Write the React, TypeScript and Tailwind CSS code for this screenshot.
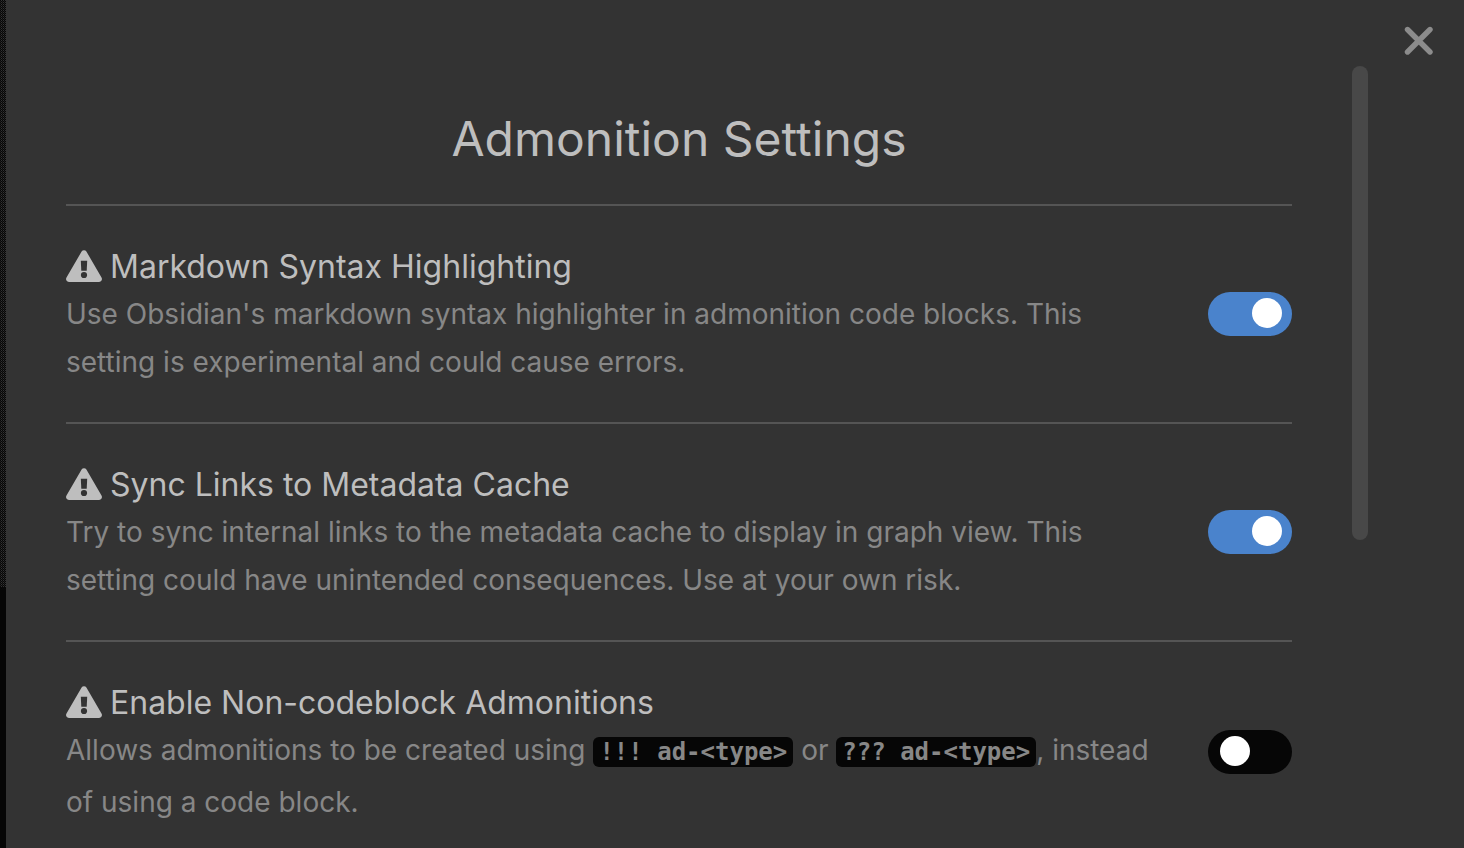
import { useState, type ReactNode } from "react";

function WarningIcon() {
  return (
    <svg viewBox="0 0 36 32" className="h-8 w-9 shrink-0" aria-hidden="true">
      <path d="M15.6 1.5a2.8 2.8 0 0 1 4.8 0L35.5 27.6a2.9 2.9 0 0 1-2.5 4.4H3a2.9 2.9 0 0 1-2.5-4.4Z" fill="currentColor" />
      <path d="M14.8 10.8h6.4l-.5 10h-5.4Z" fill="#333333" />
      <circle cx="18" cy="25" r="3.1" fill="#333333" />
    </svg>
  );
}

type SettingProps = { id: string; title: string; initial: boolean; children: ReactNode };

function Setting({ id, title, initial, children }: SettingProps) {
  const [on, setOn] = useState(initial);
  return (
    <section className="flex items-center justify-between border-t-2 border-[#555555] py-9">
      <div className="max-w-[1096px] min-w-0">
        <label htmlFor={id} className="flex items-center gap-2 text-[32px] leading-12 text-[#bebebe]">
          <WarningIcon />
          <span className="pt-[2px] leading-[46px]">{title}</span>
        </label>
        <p className="text-[28px] leading-12 text-[#878787]">{children}</p>
      </div>
      <input
        id={id}
        type="checkbox"
        role="switch"
        checked={on}
        onChange={(e) => setOn(e.target.checked)}
        className="flex h-11 w-21 shrink-0 cursor-pointer appearance-none items-start rounded-full bg-[#060606] px-3 pt-[6px] before:block before:size-[30px] before:rounded-full before:bg-white checked:justify-end checked:bg-[#4a83cc] checked:px-[10px]"
      />
    </section>
  );
}

function Code({ children }: { children: ReactNode }) {
  return (
    <code className="rounded-md bg-[#060606] px-[6px] py-px font-['DejaVu_Sans_Mono',monospace] text-[24px] leading-[52px] font-bold text-[#878787]">
      {children}
    </code>
  );
}

export default function App() {
  return (
    <div className="flex h-screen overflow-hidden bg-[#060606] font-['Inter',sans-serif]">
      <div
        aria-hidden="true"
        className="h-[587px] w-[6px] shrink-0 bg-[conic-gradient(#333333_25%,#060606_0_50%,#1c1c1c_0_75%,#060606_0)] bg-size-[2px_2px]"
      />
      <div className="flex h-full min-w-0 flex-1 justify-between bg-[#333333]">
        <main className="mx-15 max-w-[1226px] min-w-0 flex-1 pt-27">
          <h1 className="mb-[34px] text-center text-[48px] leading-[62px] text-[#bebebe]">Admonition Settings</h1>
          <Setting id="highlighting" title="Markdown Syntax Highlighting" initial={true}>
            Use Obsidian's markdown syntax highlighter in admonition code blocks. This setting is experimental and could cause errors.
          </Setting>
          <Setting id="sync" title="Sync Links to Metadata Cache" initial={true}>
            Try to sync internal links to the metadata cache to display in graph view. This setting could have unintended consequences. Use at your own risk.
          </Setting>
          <Setting id="noncode" title="Enable Non-codeblock Admonitions" initial={false}>
            Allows admonitions to be created using <Code>!!! ad-&lt;type&gt;</Code> or <Code>??? ad-&lt;type&gt;</Code>, instead of using a code block.
          </Setting>
        </main>
        <div className="mt-[66px] h-[474px] w-4 shrink-0 rounded-full bg-[#484848]" />
        <div className="shrink-0 pt-[26px] pr-[30px] pl-9">
          <button type="button" aria-label="Close" className="block text-[#8c8c8c]">
            <svg viewBox="0 0 30 30" className="size-[30px]" fill="none" stroke="currentColor" strokeWidth="5.4" strokeLinecap="round">
              <path d="M3.5 3.5L26 26M26 3.5L3.5 26" />
            </svg>
          </button>
        </div>
      </div>
    </div>
  );
}
